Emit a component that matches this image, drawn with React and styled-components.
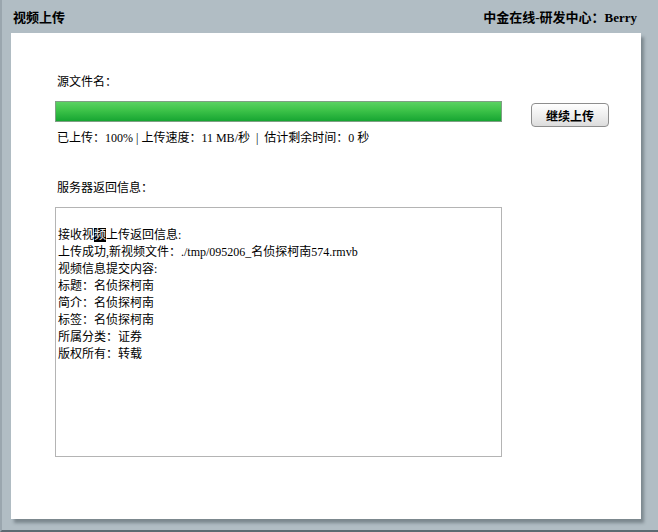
import React from "react"
import styled, { createGlobalStyle } from "styled-components"

const GlobalStyle = createGlobalStyle`
  html, body {
    margin: 0;
    padding: 0;
    background: #b1bdc4;
  }
  body {
    font-family: "Liberation Serif", "Noto Sans CJK SC", serif;
    font-size: 12px;
    color: #000;
  }
`

const Frame = styled.div`
  width: 658px;
  height: 532px;
  box-sizing: border-box;
  display: flex;
  flex-direction: column;
  background: #b1bdc4;
  border-left: 2px solid #9aa6ae;
  border-bottom: 2px solid #5d6a72;
`

const TitleBar = styled.div`
  height: 33px;
  display: flex;
  align-items: center;
  justify-content: space-between;
  padding: 0 21px 0 11px;
  font-weight: 700;
  font-size: 13px;
`

const Panel = styled.div`
  width: 630px;
  height: 486px;
  margin-left: 9px;
  background: #fff;
  box-shadow: 3px 4px 3px rgba(60, 70, 78, 0.45);
  box-sizing: border-box;
  padding: 41px 0 0 44px;
  display: flex;
  flex-direction: column;
`

const Label = styled.div`
  line-height: 17px;
  height: 17px;
  margin-left: 2px;
  margin-bottom: ${({ gap }) => gap || 0}px;
  white-space: pre;
`

const ProgressRow = styled.div`
  display: flex;
  align-items: flex-start;
  margin-bottom: 3px;
`

const Bar = styled.div`
  width: 447px;
  height: 21px;
  box-sizing: border-box;
  border: 1px solid #7f9f84;
  background: #e8e8e8;
`

const Fill = styled.div`
  height: 100%;
  background: linear-gradient(#5bd262 0%, #3cc248 45%, #16a532 100%);
`

const Button = styled.button`
  margin: 2px 0 0 29px;
  width: 78px;
  height: 24px;
  border: 1px solid #8e8e8e;
  border-radius: 4px;
  background: linear-gradient(#ffffff, #ececec 60%, #dcdcdc);
  font-family: "Noto Sans CJK SC", sans-serif;
  font-weight: 700;
  font-size: 12px;
  padding: 0;
  color: #000;
`

const Output = styled.div`
  width: 447px;
  height: 250px;
  box-sizing: border-box;
  border: 1px solid #b4b4b4;
  padding: 19px 0 0 2px;
  line-height: 17px;
`

const Line = styled.div`
  white-space: pre;
`

const Sel = styled.span`
  background: #000;
  color: #fff;
`

const lines = [
  "上传成功,新视频文件：./tmp/095206_名侦探柯南574.rmvb",
  "视频信息提交内容:",
  "标题：名侦探柯南",
  "简介：名侦探柯南",
  "标签：名侦探柯南",
  "所属分类：证券",
  "版权所有：转载",
]

const App = () => {
  const percent = 100
  return (
    <>
      <GlobalStyle />
      <Frame>
        <TitleBar>
          <span>视频上传</span>
          <span>中金在线-研发中心：Berry</span>
        </TitleBar>
        <Panel>
          <Label gap={10}>源文件名：</Label>
          <ProgressRow>
            <Bar>
              <Fill style={{ width: `${percent}%` }} />
            </Bar>
            <Button>继续上传</Button>
          </ProgressRow>
          <Label gap={33}>已上传：100% | 上传速度：11 MB/秒  |  估计剩余时间：0 秒</Label>
          <Label gap={10}>服务器返回信息：</Label>
          <Output>
            <Line>
              接收视<Sel>频</Sel>上传返回信息:
            </Line>
            {lines.map(l => (
              <Line key={l}>{l}</Line>
            ))}
          </Output>
        </Panel>
      </Frame>
    </>
  )
}

export default App
